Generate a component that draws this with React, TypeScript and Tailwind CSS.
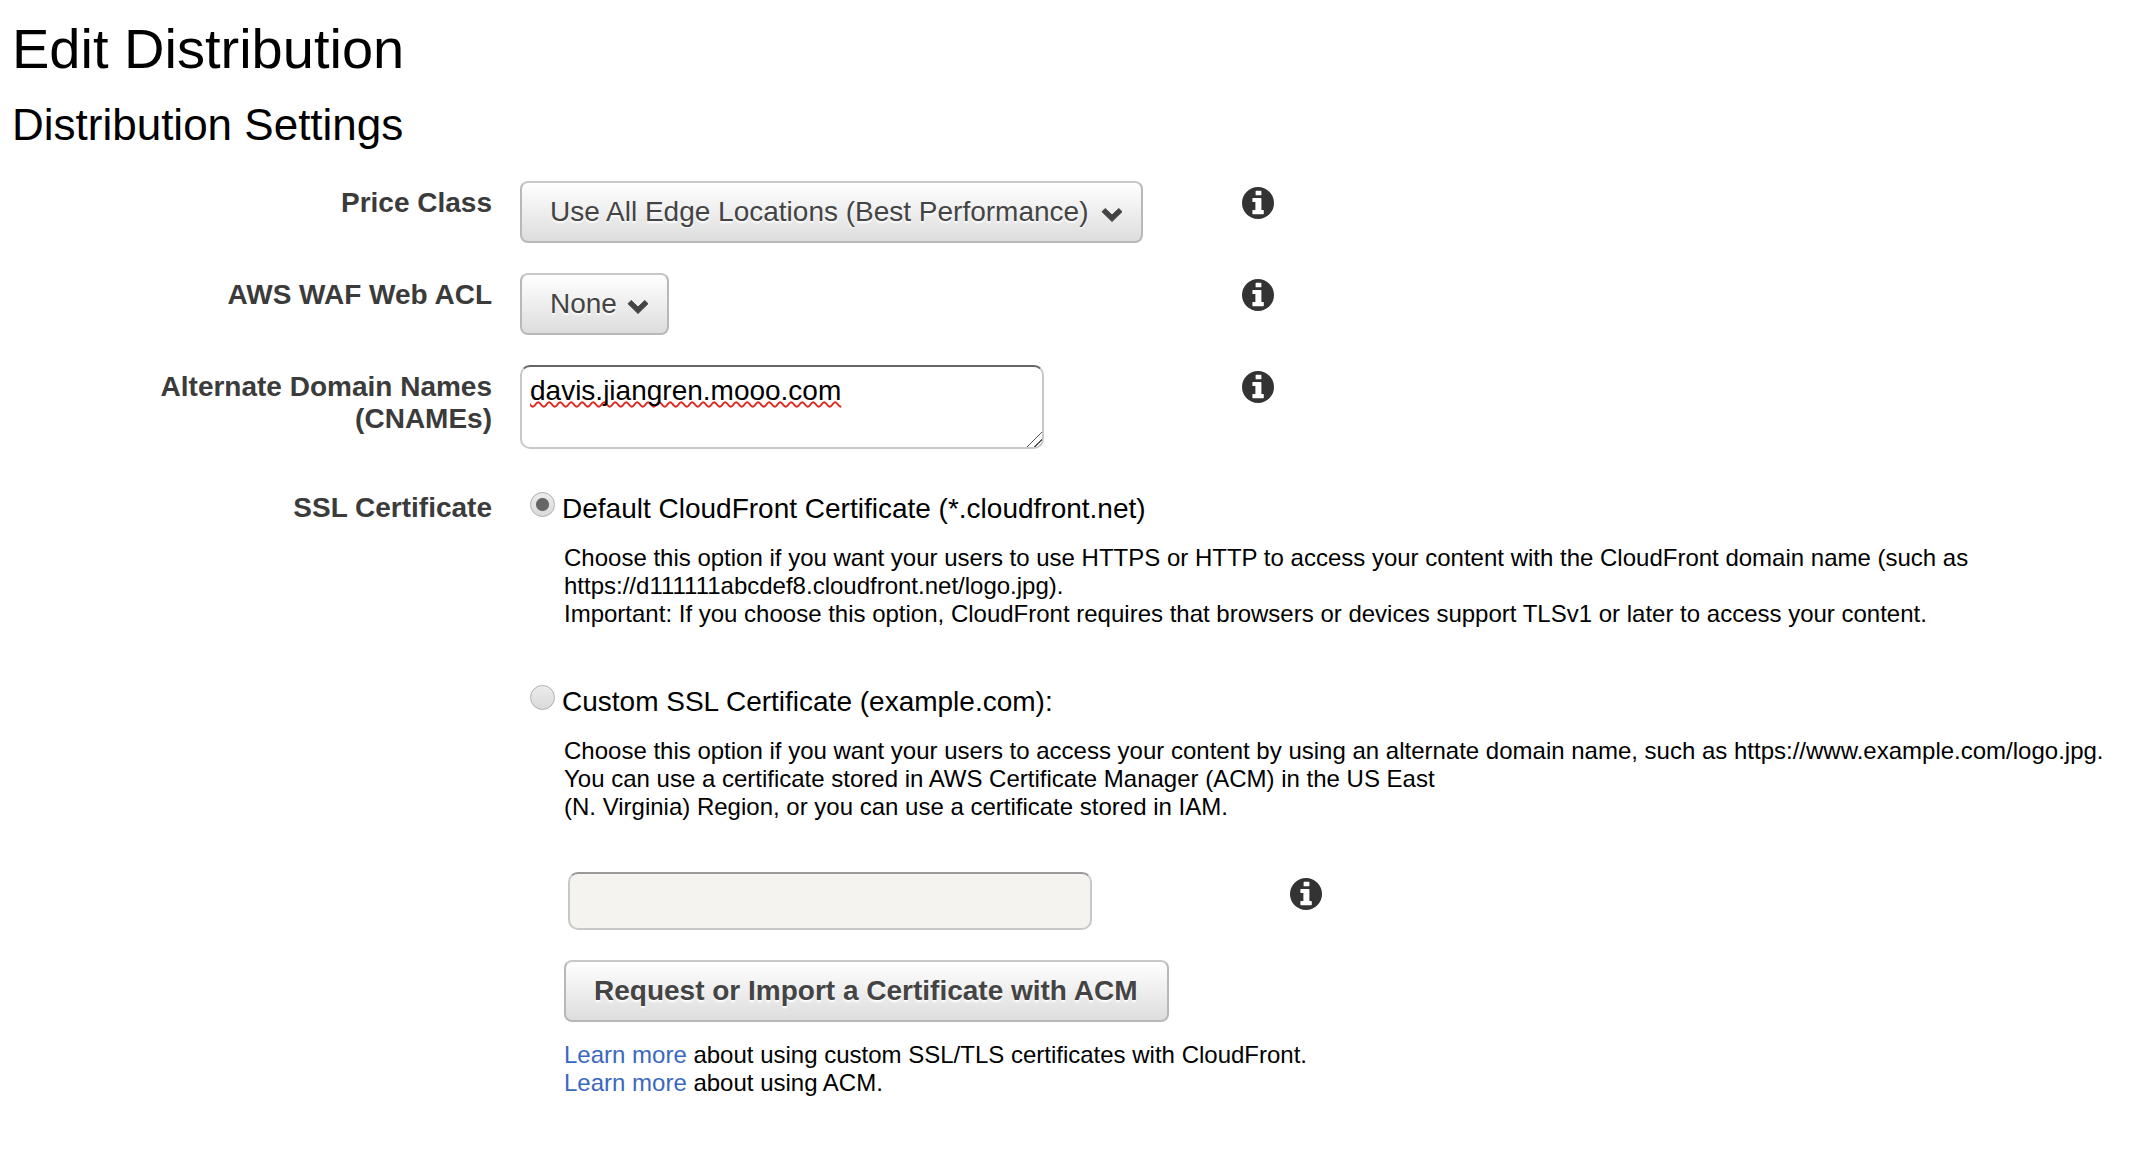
import { useState, type ReactNode } from "react";

function InfoButton({ topic }: { topic: string }) {
  return (
    <button type="button" aria-label={`About ${topic}`} className="block size-8 shrink-0 text-[#333]">
      <svg viewBox="0 0 32 32" className="size-8" aria-hidden="true">
        <circle cx="16" cy="16" r="16" fill="currentColor" />
        <path
          fill="#fff"
          d="M14.2 3.700h4.600a.6.6 0 0 1 .6.6v3.400a.6.6 0 0 1-.6.6h-4.600a.6.6 0 0 1-.6-.6V4.300a.6.6 0 0 1 .6-.6ZM11 11h7.800a.6.6 0 0 1 .6.6v11.400h1.800a.6.6 0 0 1 .6.6v3a.6.6 0 0 1-.6.6H11a.6.6 0 0 1-.6-.6v-3a.6.6 0 0 1 .6-.6h2.400v-8H11a.6.6 0 0 1-.6-.6v-2.800a.6.6 0 0 1 .6-.6Z"
        />
      </svg>
    </button>
  );
}

function SelectButton({ id, option }: { id: string; option: string }) {
  return (
    <div className="relative inline-block">
      <select
        id={id}
        className="block h-[62px] appearance-none rounded-lg border-2 border-[#b8b8b8] border-t-[#c8c8c8] bg-linear-to-b from-white to-[#dddddd] pl-7 pr-[50px] text-[28px] leading-8 text-[#444] [text-shadow:0_2px_2px_#fff]"
      >
        <option>{option}</option>
      </select>
      <svg
        viewBox="0 0 22 16"
        className="pointer-events-none absolute right-5 top-[26px] h-4 w-[22px]"
        aria-hidden="true"
      >
        <path
          d="M4.200 1.500 11 8l6.800-6.500L21 4.700 11 14.500 1 4.700Z"
          fill="#444"
          stroke="#444"
          strokeWidth="1"
          strokeLinejoin="round"
        />
      </svg>
    </div>
  );
}

function Row({ label, htmlFor, topic, children }: { label: string; htmlFor: string; topic: string; children: ReactNode }) {
  return (
    <div className="grid grid-cols-[492px_694px_auto] justify-start gap-x-7">
      <label htmlFor={htmlFor} className="pl-24 pt-1.5 text-right font-bold text-[#3b3b3b]">
        {label}
      </label>
      <div>{children}</div>
      <div className="pt-1.5">
        <InfoButton topic={topic} />
      </div>
    </div>
  );
}

function CertificateOption({
  value,
  label,
  selected,
  onSelect,
  children,
}: {
  value: string;
  label: string;
  selected: string;
  onSelect: (value: string) => void;
  children: ReactNode;
}) {
  return (
    <div>
      <label className="flex items-start gap-[7px]">
        <input
          type="radio"
          name="certificate"
          value={value}
          checked={selected === value}
          onChange={() => onSelect(value)}
          className="size-[25px] shrink-0 appearance-none rounded-full border border-[#b0b0b0] bg-linear-to-b from-[#ececec] to-[#dadada] checked:bg-[radial-gradient(circle,#666_0_6px,transparent_7px),linear-gradient(#ececec,#dadada)]"
        />
        <span className="pt-px">{label}</span>
      </label>
      <p className="mt-[19px] pl-[34px] text-2xl leading-7">{children}</p>
    </div>
  );
}

export default function App() {
  const [certificate, setCertificate] = useState("default");
  const [names, setNames] = useState("davis.jiangren.mooo.com");

  return (
    <main className="bg-white pb-10 pt-[17px] font-['Liberation_Sans',Arial,sans-serif] text-[28px] leading-8 text-black">
      <h1 className="pl-3 text-[56px] leading-[64px]">Edit Distribution</h1>
      <h2 className="mt-5 pl-3 text-[44px] leading-[48px]">Distribution Settings</h2>

      <form className="mt-8">
        <div className="flex flex-col gap-[30px]">
          <Row label="Price Class" htmlFor="price" topic="Price Class">
            <SelectButton id="price" option="Use All Edge Locations (Best Performance)" />
          </Row>
          <Row label="AWS WAF Web ACL" htmlFor="acl" topic="AWS WAF Web ACL">
            <SelectButton id="acl" option="None" />
          </Row>
          <Row label="Alternate Domain Names (CNAMEs)" htmlFor="cnames" topic="Alternate Domain Names">
            <textarea
              id="cnames"
              value={names}
              spellCheck={false}
              onChange={(e) => setNames(e.target.value)}
              className="block h-[84px] w-[524px] rounded-[10px] border-2 border-[#c8c8c8] border-t-[#666] px-2 py-2 underline decoration-[#e0281e] decoration-wavy decoration-2 underline-offset-1 [text-decoration-skip-ink:none] [&::-webkit-resizer]:bg-[linear-gradient(135deg,transparent_47%,#555_47%_52%,transparent_52%_73%,#555_73%_78%,transparent_78%)]"
            />
          </Row>
        </div>

        <fieldset className="mt-[43px] grid grid-cols-[492px_minmax(0,1fr)] gap-x-7 pr-6" aria-labelledby="ssl-title">
          <div id="ssl-title" className="text-right font-bold text-[#3b3b3b]">
            SSL Certificate
          </div>
          <div className="pl-2.5">
            <CertificateOption
              value="default"
              label="Default CloudFront Certificate (*.cloudfront.net)"
              selected={certificate}
              onSelect={setCertificate}
            >
              Choose this option if you want your users to use HTTPS or HTTP to access your content with the CloudFront
              domain name (such as https://d111111abcdef8.cloudfront.net/logo.jpg).
              <br />
              Important: If you choose this option, CloudFront requires that browsers or devices support TLSv1 or later to
              access your content.
            </CertificateOption>
            <div className="mt-[57px]">
              <CertificateOption
                value="custom"
                label="Custom SSL Certificate (example.com):"
                selected={certificate}
                onSelect={setCertificate}
              >
                Choose this option if you want your users to access your content by using an alternate domain name, such as
                https://www.example.com/logo.jpg. You can use a certificate stored in AWS Certificate Manager (ACM) in the US
                East
                <br />
                (N. Virginia) Region, or you can use a certificate stored in IAM.
              </CertificateOption>
            </div>

            <div className="mt-[51px] flex gap-[198px] pl-[38px]">
              <input
                type="text"
                disabled
                aria-label="Custom SSL certificate"
                className="h-[58px] w-[524px] rounded-[10px] border-2 border-[#c8c8c8] border-t-[#999] bg-[#f4f3ef] px-2"
              />
              <div className="pt-1.5">
                <InfoButton topic="custom SSL certificates" />
              </div>
            </div>

            <div className="mt-[30px] pl-[34px]">
              <button
                type="button"
                className="block h-[62px] rounded-lg border-2 border-[#b8b8b8] border-t-[#c8c8c8] bg-linear-to-b from-white to-[#dddddd] pl-7 pr-[30px] font-bold text-[#444] [text-shadow:0_2px_2px_#fff]"
              >
                Request or Import a Certificate with ACM
              </button>
              <p className="mt-[19px] text-2xl leading-7">
                <a href="#certificates" className="text-[#3a68bf]">
                  Learn more
                </a>{" "}
                about using custom SSL/TLS certificates with CloudFront.
                <br />
                <a href="#acm" className="text-[#3a68bf]">
                  Learn more
                </a>{" "}
                about using ACM.
              </p>
            </div>
          </div>
        </fieldset>
      </form>
    </main>
  );
}
